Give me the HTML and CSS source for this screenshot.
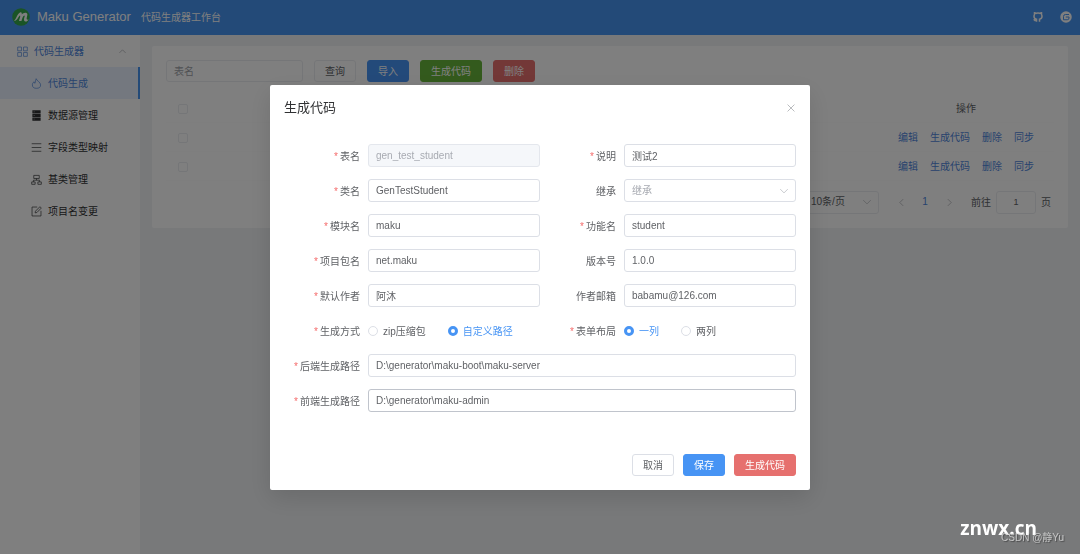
FILE: index.html
```html
<!DOCTYPE html>
<html lang="zh-CN">
<head>
<meta charset="utf-8">
<title>Maku Generator</title>
<link rel="stylesheet" href="styles.css">
</head>
<body>
<div class="app">
  <header class="topbar">
    <svg class="logo" viewBox="0 0 36 36" aria-hidden="true">
      <circle cx="18" cy="18" r="17.500" fill="#35a94c"/>
      <path d="M4 26C9 22 10 12 16 9c3-1 4 1 3.500 4C22 10 26 8.500 29 10c3 1.500 1.500 5 .8 8-1 4-.8 6 3.200 5-2 5-9 6-9 0 0-4 2.500-7 1-8-3 0-5 7-6 11h-5c1-4 3.500-10 2-11-3 1-4.500 10-12 11z" fill="#fff"/>
    </svg>
    <h1 class="brand">Maku Generator</h1>
    <span class="subtitle">代码生成器工作台</span>
    <nav class="links">
      <a href="#" aria-label="GitHub"><svg viewBox="0 0 24 24"><path d="M9 21.500v-5C6 16 4 14 4 10.500 4 9 4.500 8 5 7.200V3.500c1.500 0 2.500.5 3.500 1.200a14 14 0 0 1 7 0c1-.7 2-1.200 3.500-1.200v3.700c.5.800 1 1.800 1 3.300 0 3.500-2 5.500-5 6v5M9 19c-3 1-4-1-5.500-2.500" fill="none" stroke="#fff" stroke-width="3"/></svg></a>
      <a href="#" aria-label="Gitee"><svg viewBox="0 0 24 24"><circle cx="12" cy="12" r="11.500" fill="#fff"/><path d="M18 7h-7a4 4 0 0 0-4 4v6.500h7.500A3.500 3.500 0 0 0 18 14v-2h-6.500" fill="none" stroke="#4794f0" stroke-width="2"/></svg></a>
    </nav>
  </header>
  <div class="main">
    <nav class="sidebar">
      <a class="item group" href="#">
        <svg viewBox="0 0 16 16"><path d="M1 1.500h5.500V7H1zM9.500 1.500H15V7H9.500zM1 9.500h5.500V15H1zM9.500 9.500H15V15H9.500z"/></svg>
        <span>代码生成器</span>
        <svg class="fold" viewBox="0 0 16 16"><path d="M2.500 10.500L8 5l5.500 5.500"/></svg>
      </a>
      <a class="item active" href="#"><svg viewBox="0 0 16 16"><path d="M7.500 1c.5 3 6.500 5 6.500 9a6 5 0 0 1-12 0c0-2 1-3.500 2.500-4.500.2 1.200.6 2 1.300 2.300C6.500 5.500 6.500 3 7.500 1z"/></svg><span>代码生成</span></a>
      <a class="item" href="#"><svg viewBox="0 0 16 16"><path d="M2 .5h12v4.500H2zM2 5.700h12v4.500H2zM2 11h12v4.500H2z" fill="currentColor" stroke="none"/><path d="M4 2.700h1M4 8h1M4 13.200h1" stroke="#fff"/></svg><span>数据源管理</span></a>
      <a class="item" href="#"><svg viewBox="0 0 16 16"><path d="M1 2.500h14M1 8h14M1 13.500h14"/></svg><span>字段类型映射</span></a>
      <a class="item" href="#"><svg viewBox="0 0 16 16"><path d="M4 2h8v4.500H4zM8 6.500V9M3.500 11.500V9h9v2.500M1 11.500h5V15H1zM10 11.500h5V15h-5z"/></svg><span>基类管理</span></a>
      <a class="item" href="#"><svg viewBox="0 0 16 16"><path d="M9 1.500H1.500v13h13V7M6 10l.5-2.500 6.500-6.500 2 2-6.500 6.500z"/></svg><span>项目名变更</span></a>
    </nav>
    <main class="content">
      <section class="card">
        <form class="toolbar">
          <input class="field search" type="text" placeholder="表名" aria-label="表名">
          <button class="btn" type="button">查询</button>
          <button class="btn primary" type="button">导入</button>
          <button class="btn success" type="button">生成代码</button>
          <button class="btn danger" type="button">删除</button>
        </form>
        <table class="table">
          <thead>
            <tr><th class="pick"><input class="check" type="checkbox" aria-label="全选"></th><th></th><th class="ops">操作</th></tr>
          </thead>
          <tbody>
            <tr><td class="pick"><input class="check" type="checkbox" aria-label="选择第1行"></td><td></td><td class="ops"><div class="actions"><a href="#">编辑</a><a href="#">生成代码</a><a href="#">删除</a><a href="#">同步</a></div></td></tr>
            <tr><td class="pick"><input class="check" type="checkbox" aria-label="选择第2行"></td><td></td><td class="ops"><div class="actions"><a href="#">编辑</a><a href="#">生成代码</a><a href="#">删除</a><a href="#">同步</a></div></td></tr>
          </tbody>
        </table>
        <div class="pagination">
          <div class="select-box size">
            <select class="field" aria-label="每页条数"><option>10条/页</option></select>
            <svg viewBox="0 0 16 16"><path d="M2 5l6 6 6-6"/></svg>
          </div>
          <div class="pager">
            <button type="button" aria-label="上一页"><svg viewBox="0 0 16 16"><path d="M11 2L5 8l6 6"/></svg></button>
            <button type="button" class="current">1</button>
            <button type="button" aria-label="下一页"><svg viewBox="0 0 16 16"><path d="M5 2l6 6-6 6"/></svg></button>
          </div>
          <label for="page">前往</label>
          <input class="field page" id="page" type="text" value="1">
          <span>页</span>
        </div>
      </section>
    </main>
  </div>
</div>

<div class="overlay">
  <div class="dialog" role="dialog" aria-labelledby="dialog-title">
    <div class="dialog-head">
      <h2 id="dialog-title">生成代码</h2>
      <button class="close" type="button" aria-label="关闭"><svg viewBox="0 0 16 16"><path d="M2.500 2.500l11 11M13.500 2.500l-11 11"/></svg></button>
    </div>
    <form class="form">
      <div class="row"><label class="required" for="f1">表名</label><input class="field" id="f1" type="text" value="gen_test_student" disabled></div>
      <div class="row"><label class="required" for="f2">说明</label><input class="field" id="f2" type="text" value="测试2"></div>
      <div class="row"><label class="required" for="f3">类名</label><input class="field" id="f3" type="text" value="GenTestStudent"></div>
      <div class="row"><label for="f4">继承</label>
        <div class="select-box"><select class="field empty" id="f4"><option>继承</option></select><svg viewBox="0 0 16 16"><path d="M2 5l6 6 6-6"/></svg></div>
      </div>
      <div class="row"><label class="required" for="f5">模块名</label><input class="field" id="f5" type="text" value="maku"></div>
      <div class="row"><label class="required" for="f6">功能名</label><input class="field" id="f6" type="text" value="student"></div>
      <div class="row"><label class="required" for="f7">项目包名</label><input class="field" id="f7" type="text" value="net.maku"></div>
      <div class="row"><label for="f8">版本号</label><input class="field" id="f8" type="text" value="1.0.0"></div>
      <div class="row"><label class="required" for="f9">默认作者</label><input class="field" id="f9" type="text" value="阿沐"></div>
      <div class="row"><label for="f10">作者邮箱</label><input class="field" id="f10" type="text" value="babamu@126.com"></div>
      <div class="row" role="radiogroup" aria-labelledby="l1"><span class="label required" id="l1">生成方式</span>
        <div class="radios">
          <label class="radio"><input type="radio" name="mode"><span>zip压缩包</span></label>
          <label class="radio"><input type="radio" name="mode" checked><span>自定义路径</span></label>
        </div>
      </div>
      <div class="row" role="radiogroup" aria-labelledby="l2"><span class="label required" id="l2">表单布局</span>
        <div class="radios">
          <label class="radio"><input type="radio" name="layout" checked><span>一列</span></label>
          <label class="radio"><input type="radio" name="layout"><span>两列</span></label>
        </div>
      </div>
      <div class="row wide"><label class="required" for="f11">后端生成路径</label><input class="field" id="f11" type="text" value="D:\generator\maku-boot\maku-server"></div>
      <div class="row wide"><label class="required" for="f12">前端生成路径</label><input class="field hovered" id="f12" type="text" value="D:\generator\maku-admin"></div>
    </form>
    <div class="dialog-foot">
      <button class="btn" type="button">取消</button>
      <button class="btn primary" type="button">保存</button>
      <button class="btn danger" type="button">生成代码</button>
    </div>
  </div>
</div>
<div class="site-mark">znwx.cn</div>
<div class="author-mark">CSDN @静Yu</div>
</body>
</html>
```

FILE: styles.css
```css
* { box-sizing: border-box; }

body {
  margin: 0;
  font: 10px/14px "Liberation Sans", "Noto Sans CJK SC", sans-serif;
  color: #606266;
}

a { color: inherit; text-decoration: none; }
h1, h2 { margin: 0; font-weight: 400; }
button, input, select { font: inherit; color: inherit; margin: 0; }
svg { display: block; fill: none; stroke: currentColor; flex: none; }

.app { min-height: 100vh; display: flex; flex-direction: column; }

.topbar {
  height: 35px;
  padding: 0 8px 2px 12px;
  display: flex;
  align-items: center;
  background: #4794f0;
  color: #fff;
}
.logo { width: 18px; height: 18px; stroke: none; }
.brand { margin-left: 7px; font-size: 13px; line-height: 18px; }
.subtitle { margin-left: 10px; padding-top: 2px; }
.links { margin-left: auto; display: flex; gap: 16px; }
.links svg { width: 12px; height: 12px; stroke: none; }

.main { flex: 1; display: flex; }

.sidebar { width: 140px; flex: none; background: #fff; color: #303133; }
.item {
  height: 32px;
  padding-left: 31px;
  display: flex;
  align-items: center;
  gap: 6px;
}
.item span { padding-top: 2px; }
.item svg { width: 11px; height: 11px; }
.item.group { padding-left: 17px; padding-right: 13px; color: #4f86dc; }
.item .fold { width: 9px; height: 9px; margin-left: auto; color: #909399; }
.item.active { background: #e8f1fe; color: #4f86dc; border-right: 2px solid #4794f0; }

.content { flex: 1; min-width: 0; padding: 11px 12px; background: #f0f2f5; }
.card { padding: 14px; background: #fff; border-radius: 2px; }

.toolbar { display: flex; gap: 11px; }

.field {
  width: 100%;
  min-width: 0;
  height: 23px;
  padding: 0 7px;
  border: 1px solid #dcdfe6;
  border-radius: 3px;
  background: #fff;
  appearance: none;
  outline: 0;
}
.field::placeholder { color: #a0a3a9; opacity: 1; }
.field:disabled { background: #f5f7fa; color: #a8abb2; border-color: #e4e7ed; opacity: 1; }
.field.empty { color: #a8abb2; }
.field.hovered { border-color: #c0c4cc; }
.search { width: 137px; height: 22px; }
.card .field, .toolbar .btn:not(.primary, .success, .danger) { border-color: #ebedf0; }

.btn {
  height: 22px;
  padding: 1px 10px 0;
  border: 1px solid #dcdfe6;
  border-radius: 3px;
  background: #fff;
  white-space: nowrap;
}
.btn.primary { background: #4794f4; border-color: #4794f4; color: #fff; }
.btn.success { background: #67b53a; border-color: #67b53a; color: #fff; }
.btn.danger { background: #e6706e; border-color: #e6706e; color: #fff; }

.table {
  width: 100%;
  margin-top: 12px;
  border-collapse: collapse;
  table-layout: fixed;
}
.table th, .table td { height: 28px; padding: 2px 0 0; border-bottom: 1px solid #fcfcfd; text-align: center; }
.table td { height: 29px; }
.table th { font-weight: 400; }
.table .pick { width: 34px; }
.table .ops { width: 176px; }
.check {
  width: 10px;
  height: 10px;
  display: block;
  margin: 0 auto;
  border: 1px solid #ebedf0;
  border-radius: 2px;
  appearance: none;
}
.actions { display: flex; justify-content: center; gap: 12px; color: #4f86dc; }

.pagination { margin: 10px 3px 0 0; display: flex; justify-content: flex-end; align-items: center; gap: 5px; }
.pagination label, .pagination span { padding-top: 2px; }
.select-box { display: grid; align-items: center; width: 100%; }
.select-box > * { grid-area: 1 / 1; }
.select-box svg { width: 10px; height: 10px; margin-right: 7px; justify-self: end; color: #a8abb2; pointer-events: none; }
.size { width: 76px; }
.pager { display: flex; margin: 0 5px; }
.pager button {
  width: 24px;
  height: 22px;
  padding: 0;
  border: 0;
  background: none;
  display: grid;
  place-items: center;
}
.pager svg { width: 9px; height: 9px; color: #909399; }
.pager .current { color: #4f86dc; }
.page { width: 40px; text-align: center; font-size: 9px; }

.overlay {
  position: fixed;
  inset: 0;
  padding-top: 85px;
  overflow: auto;
  background: rgba(0, 0, 0, 0.5);
}
.dialog {
  width: 50%;
  margin: 0 auto;
  padding: 14px;
  border-radius: 2px;
  background: #fff;
  box-shadow: 0 8px 24px rgba(0, 0, 0, 0.12);
}
.dialog-head { display: flex; justify-content: space-between; align-items: center; }
.dialog-head h2 { font-size: 13px; line-height: 17px; color: #303133; }
.close { padding: 0; border: 0; background: none; color: #909399; }
.close svg { width: 10px; height: 10px; }

.form {
  margin-top: 28px;
  display: grid;
  grid-template-columns: 1fr 1fr;
  row-gap: 12px;
}
.row { display: grid; grid-template-columns: 84px 1fr; align-items: center; height: 23px; }
.row.wide { grid-column: 1 / -1; }
.row > label, .label { padding: 2px 8px 0 0; text-align: right; white-space: nowrap; }
.required::before { content: "*"; margin-right: 2px; color: #f56c6c; }

.radios { display: flex; gap: 22px; }
.radio { display: flex; align-items: center; gap: 5px; }
.radio span { padding-top: 2px; }
.radio input {
  width: 10px;
  height: 10px;
  border: 1px solid #dcdfe6;
  border-radius: 50%;
  appearance: none;
}
.radio input:checked { border: 3px solid #4794f4; background: #fff; }
.radio input:checked + span { color: #4794f4; }

.dialog-foot { margin-top: 42px; display: flex; justify-content: flex-end; gap: 9px; }

.site-mark {
  position: fixed;
  right: 43px;
  bottom: 13px;
  font: 700 19px/26px "Open Sans", sans-serif;
  color: #fff;
}
.author-mark {
  position: fixed;
  right: 16px;
  bottom: 9px;
  font-size: 10px;
  color: rgba(225, 225, 225, 0.75);
  text-shadow: 1px 1px 1px rgba(0, 0, 0, 0.4);
}
```
